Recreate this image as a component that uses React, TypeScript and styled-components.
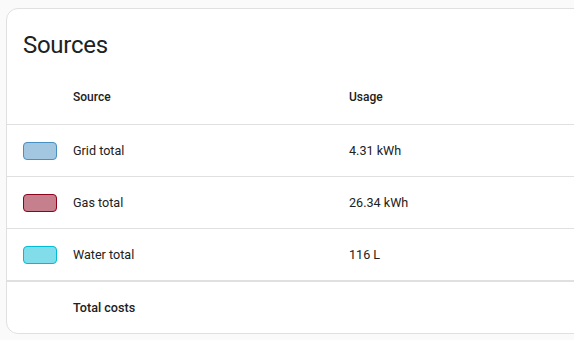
import React from 'react';
import styled, { createGlobalStyle } from 'styled-components';

const GlobalStyle = createGlobalStyle`
  html, body {
    margin: 0;
    padding: 0;
    background: #fafafa;
    overflow: hidden;
  }
  body {
    font-family: Roboto, "Noto Sans", sans-serif;
    color: #212121;
  }
`;

interface Source {
  name: string;
  usage: string;
  border: string;
  fill: string;
}

const sources: Source[] = [
  { name: 'Grid total', usage: '4.31 kWh', border: '#488fc2', fill: '#a4c7e1' },
  { name: 'Gas total', usage: '26.34 kWh', border: '#8e021b', fill: '#c6808d' },
  { name: 'Water total', usage: '116 L', border: '#00bcd4', fill: '#80dde9' },
];

export default function App() {
  return (
    <>
      <GlobalStyle />
      <Page>
        <Card>
          <CardHeader>Sources</CardHeader>
          <Table>
            <HeadRow>
              <Cell />
              <HeadCell>Source</HeadCell>
              <HeadCell>Usage</HeadCell>
            </HeadRow>
            {sources.map((s, i) => (
              <Row key={s.name} $last={i === sources.length - 1}>
                <Cell>
                  <Bullet $border={s.border} $fill={s.fill} />
                </Cell>
                <TextCell>{s.name}</TextCell>
                <TextCell>{s.usage}</TextCell>
              </Row>
            ))}
            <TotalRow>
              <Cell />
              <TotalCell>Total costs</TotalCell>
              <Cell />
            </TotalRow>
          </Table>
        </Card>
      </Page>
    </>
  );
}

const Page = styled.div`
  padding: 8px 0 0 6px;
`;

const Card = styled.div`
  width: 640px;
  background: #fff;
  border: 1px solid #e0e0e0;
  border-radius: 12px;
  overflow: hidden;
`;

const CardHeader = styled.h1`
  margin: 0;
  padding: 12px 16px 0;
  font-size: 24px;
  font-weight: 400;
  line-height: 48px;
  letter-spacing: -0.012em;
  color: #212121;
`;

const Table = styled.div`
  display: flex;
  flex-direction: column;
`;

const RowBase = styled.div`
  display: grid;
  grid-template-columns: 66px 276px 1fr;
  align-items: center;
`;

const HeadRow = styled(RowBase)`
  height: 55px;
  border-bottom: 1px solid #e0e0e0;
`;

const Row = styled(RowBase)<{ $last?: boolean }>`
  height: 51px;
  border-bottom: ${(p) => (p.$last ? '2px' : '1px')} solid #e0e0e0;
`;

const TotalRow = styled(RowBase)`
  height: 51px;
`;

const Cell = styled.div`
  padding-left: 16px;
  display: flex;
  align-items: center;
`;

const HeadCell = styled.div`
  font-size: 12px;
  font-weight: 500;
  color: #212121;
`;

const TextCell = styled.div`
  font-size: 12.6px;
  color: #212121;
`;

const TotalCell = styled.div`
  font-size: 12.6px;
  font-weight: 500;
  color: #212121;
`;

const Bullet = styled.div<{ $border: string; $fill: string }>`
  width: 32px;
  height: 16px;
  border: 1px solid ${(p) => p.$border};
  background: ${(p) => p.$fill};
  border-radius: 4px;
`;
